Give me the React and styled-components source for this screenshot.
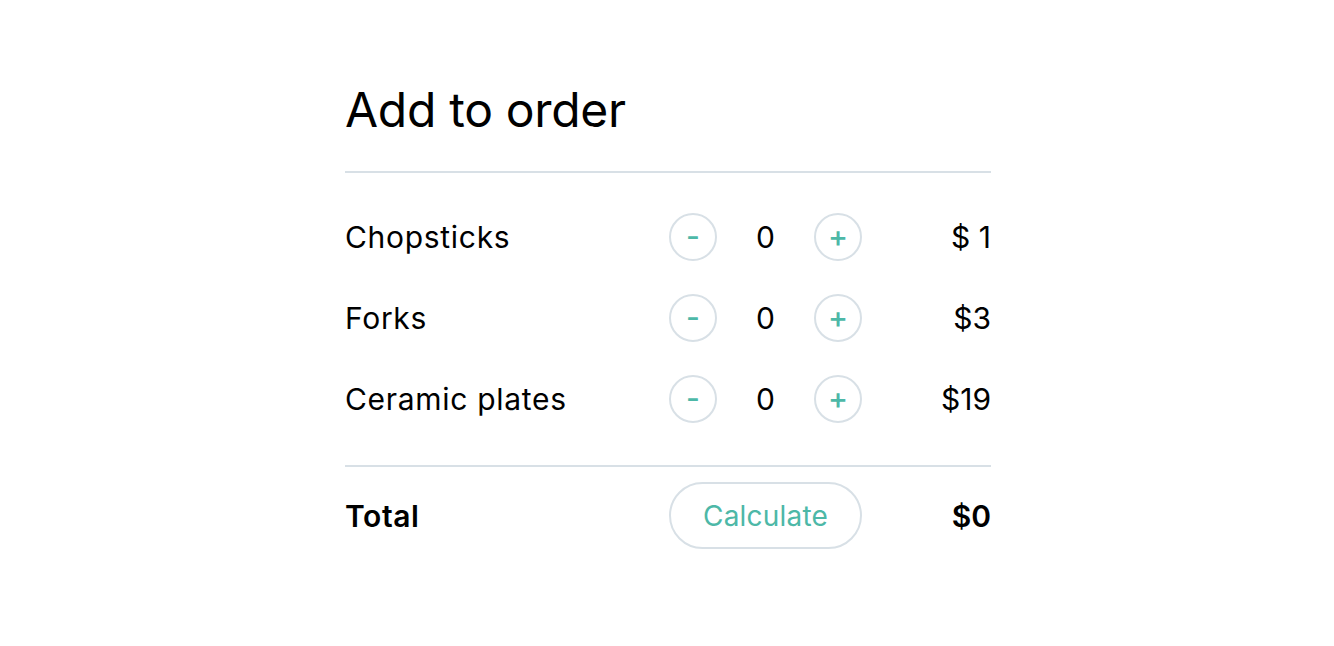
import React from 'react'
import styled, { createGlobalStyle } from 'styled-components'

const items = [
	{ name: 'Chopsticks', price: '$ 1' },
	{ name: 'Forks', price: '$3' },
	{ name: 'Ceramic plates', price: '$19' },
]

const App = () =>
	<>
		<Global />
		<Card>
			<Title>Add to order</Title>
			<Divider />
			<List>
				{items.map(item =>
					<Row key={item.name}>
						<Name>{item.name}</Name>
						<Controls>
							<RoundButton>-</RoundButton>
							<Count>0</Count>
							<RoundButton>+</RoundButton>
						</Controls>
						<Price>{item.price}</Price>
					</Row>
				)}
			</List>
			<Divider />
			<TotalRow>
				<Name bold>Total</Name>
				<CalcButton>Calculate</CalcButton>
				<Price bold>$0</Price>
			</TotalRow>
		</Card>
	</>

const Global = createGlobalStyle`
	body {
		margin: 0;
		background: #fff;
		font-family: Inter, "Noto Sans", sans-serif;
		color: #000;
	}
`
const Card = styled.div`
	width: 646px;
	margin: 0 auto;
	padding-top: 82px;
	transform: translateX(1px);
`
const Title = styled.h1`
	margin: 0 0 33px;
	font-size: 48px;
	font-weight: 400;
	line-height: 56px;
	letter-spacing: -0.3px;
`
const Divider = styled.hr`
	margin: 0;
	border: none;
	height: 2px;
	background: #d8e0e6;
`
const List = styled.div`
	display: flex;
	flex-direction: column;
	gap: 33px;
	padding: 40px 0 42px;
`
const Row = styled.div`
	display: grid;
	grid-template-columns: 1fr 193px 129px;
	align-items: center;
	height: 48px;
`
const TotalRow = styled(Row)`
	height: 67px;
	margin-top: 15px;
`
const Name = styled.div`
	font-size: 30px;
	font-weight: ${p => p.bold ? 600 : 400};
	letter-spacing: ${p => p.bold ? '0.6px' : '0.7px'};
`
const Controls = styled.div`
	display: flex;
	align-items: center;
	justify-content: space-between;
`
const RoundButton = styled.button`
	width: 48px;
	height: 48px;
	border-radius: 50%;
	border: 2px solid #d8e0e6;
	background: #fff;
	color: #4db8a7;
	font-family: inherit;
	font-size: 30px;
	font-weight: 500;
	padding: 0 0 3px;
	display: flex;
	align-items: center;
	justify-content: center;
`
const Count = styled.span`
	font-size: 30px;
`
const Price = styled.div`
	text-align: right;
	font-size: 30px;
	font-weight: ${p => p.bold ? 600 : 400};
`
const CalcButton = styled.button`
	height: 67px;
	border-radius: 34px;
	border: 2px solid #d8e0e6;
	background: #fff;
	color: #4db8a7;
	font-family: inherit;
	font-size: 28px;
	letter-spacing: 0.2px;
`

export default App
